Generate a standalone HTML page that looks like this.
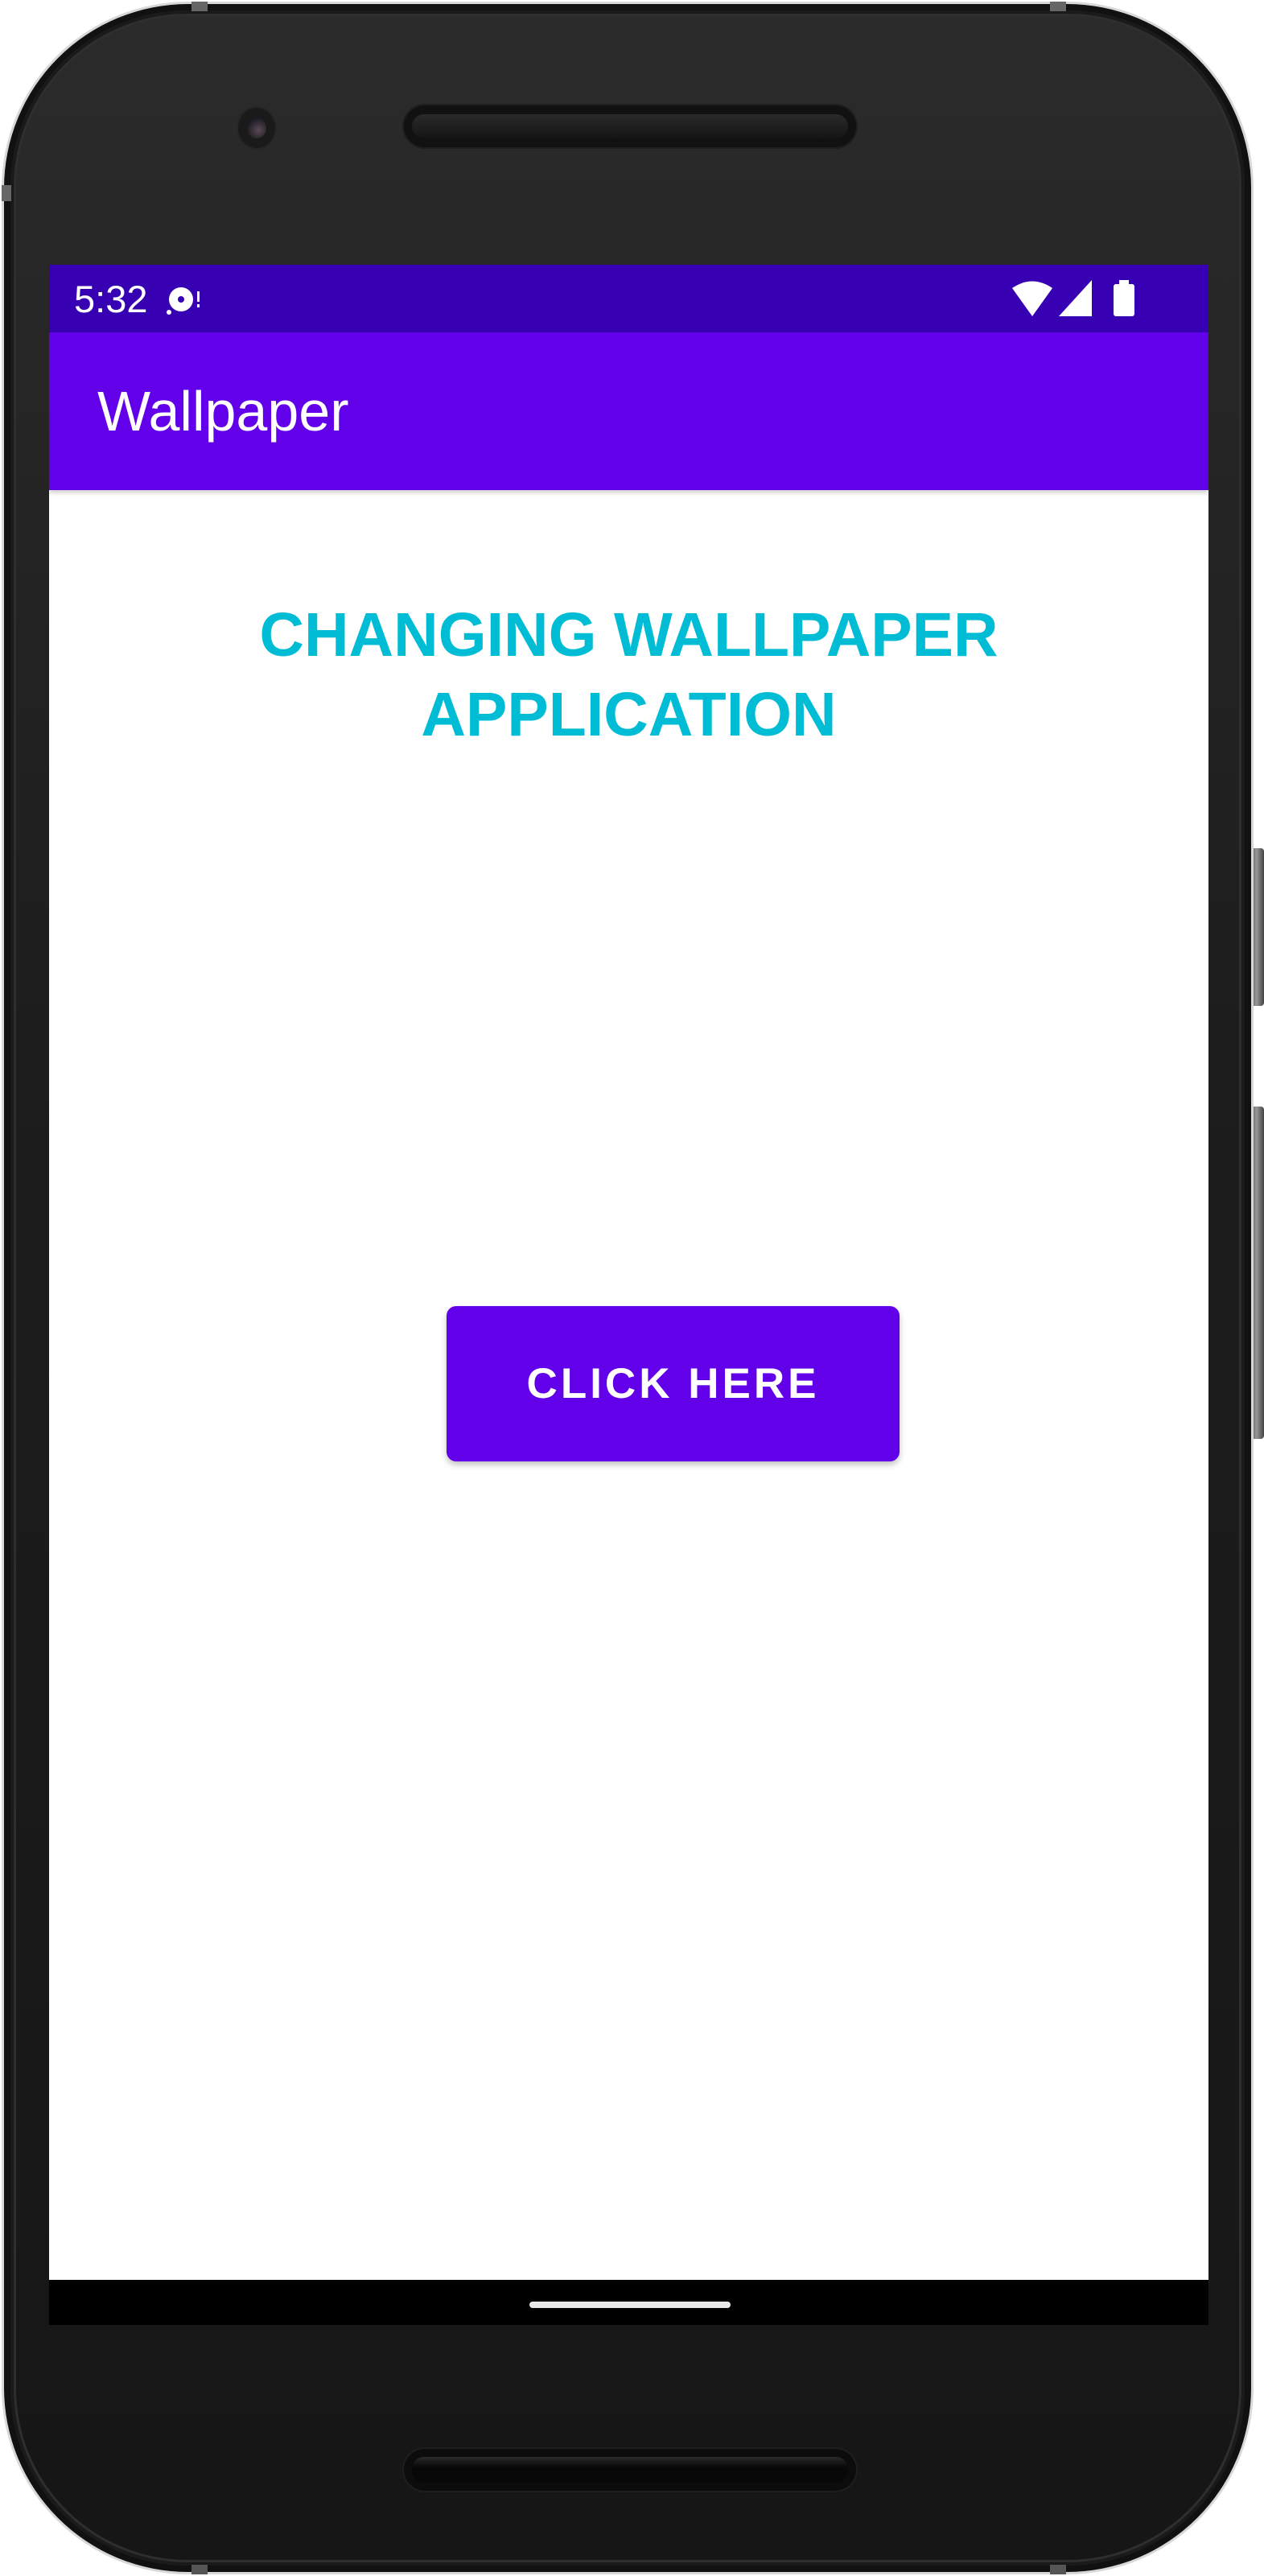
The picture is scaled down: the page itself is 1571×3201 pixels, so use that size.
<!DOCTYPE html>
<html><head><meta charset="utf-8"><style>
*{margin:0;padding:0;box-sizing:border-box}
html,body{width:1571px;height:3201px;background:#fff;overflow:hidden;position:relative;font-family:"Liberation Sans",sans-serif}
.abs{position:absolute}
.btn{background:#555;border-radius:4px}
</style></head><body>
<div class="abs btn" style="left:1552px;top:1054px;width:19px;height:196px;background:linear-gradient(90deg,#333,#999 50%,#444)"></div>
<div class="abs btn" style="left:1552px;top:1375px;width:19px;height:413px;background:linear-gradient(90deg,#333,#999 50%,#444)"></div>
<div class="abs" style="left:2px;top:2px;width:1556px;height:3197px;border-radius:232px;background:#d8d8d8"></div>
<div class="abs" style="left:5px;top:5px;width:1550px;height:3191px;border-radius:229px;background:#111"></div>
<div class="abs" style="left:13px;top:13px;width:1534px;height:3175px;border-radius:220px;background:linear-gradient(180deg,#2b2b2b 0%,#1d1d1d 40%,#161616 100%);box-shadow:inset 0 0 0 4px #1a1a1a,inset 0 0 0 7px #2e2e2e"></div>
<div class="abs" style="left:238px;top:2px;width:20px;height:12px;background:#666"></div>
<div class="abs" style="left:1305px;top:2px;width:20px;height:12px;background:#666"></div>
<div class="abs" style="left:238px;top:3187px;width:20px;height:12px;background:#555"></div>
<div class="abs" style="left:1305px;top:3187px;width:20px;height:12px;background:#555"></div>
<div class="abs" style="left:2px;top:230px;width:12px;height:20px;background:#666"></div>
<!-- camera -->
<div class="abs" style="left:296px;top:134px;width:46px;height:50px;border-radius:50%;background:#1a1a1a;box-shadow:0 0 0 2px #262626"></div>
<div class="abs" style="left:307px;top:146px;width:24px;height:26px;border-radius:50%;background:radial-gradient(circle at 60% 60%,#5a4a55,#1c1a22 70%)"></div>
<!-- speakers -->
<div class="abs" style="left:502px;top:131px;width:562px;height:52px;border-radius:26px;background:#111;box-shadow:0 0 0 2px #1e1e1e"></div>
<div class="abs" style="left:512px;top:142px;width:542px;height:30px;border-radius:15px;background:linear-gradient(180deg,#2a2a2a,#151515)"></div>
<div class="abs" style="left:502px;top:3043px;width:562px;height:52px;border-radius:26px;background:#0c0c0c;box-shadow:0 0 0 2px #1e1e1e"></div>
<div class="abs" style="left:512px;top:3053px;width:542px;height:32px;border-radius:15px;background:linear-gradient(180deg,#2a2a2a,#080808 40%)"></div>
<!-- screen -->
<div class="abs" style="left:61px;top:329px;width:1441px;height:2560px;background:#fff;overflow:hidden">
  <div class="abs" style="left:0;top:0;width:1441px;height:84px;background:#3700b3"></div>
  <div class="abs" style="left:31px;top:18px;color:#fff;font-size:47px;line-height:50px">5:32</div>
  <svg class="abs" style="left:145px;top:20px" width="50" height="50" viewBox="0 0 50 50">
    <circle cx="19" cy="23" r="15" fill="#fff"/><circle cx="19" cy="23" r="4" fill="#3700b3"/>
    <circle cx="4" cy="39" r="3" fill="#fff"/><rect x="39" y="13" width="3" height="13" fill="#fff"/><rect x="39" y="29" width="3" height="4" fill="#fff"/>
  </svg>
  <svg class="abs" style="left:1195px;top:18px" width="160" height="50" viewBox="0 0 160 50">
    <path d="M2 11 Q27 -6 52 11 L27 46 Z" fill="#fff"/>
    <path d="M60 46 L101 46 L101 1 Z" fill="#fff"/>
    <rect x="128" y="6" width="26" height="40" rx="3" fill="#fff"/><rect x="135" y="1" width="12" height="7" fill="#fff"/>
  </svg>
  <div class="abs" style="left:0;top:84px;width:1441px;height:196px;background:#6200ea;box-shadow:0 3px 6px rgba(0,0,0,.2)"></div>
  <div class="abs" style="left:60px;top:142px;color:#fff;font-size:70px;line-height:80px">Wallpaper</div>
  <div class="abs" style="left:0;top:411px;width:1441px;text-align:center;color:#00bcd4;font-weight:bold;font-size:77px;line-height:99px">CHANGING WALLPAPER<br>APPLICATION</div>
  <div class="abs" style="left:494px;top:1294px;width:563px;height:193px;border-radius:12px;background:#6200ea;box-shadow:0 4px 8px rgba(0,0,0,.25);color:#fff;font-weight:bold;font-size:53px;letter-spacing:4px;text-align:center;line-height:193px">CLICK HERE</div>
  <div class="abs" style="left:0;top:2504px;width:1441px;height:56px;background:#000"></div>
  <div class="abs" style="left:597px;top:2531px;width:250px;height:8px;border-radius:4px;background:#e8e8e8"></div>
</div>
</body></html>
